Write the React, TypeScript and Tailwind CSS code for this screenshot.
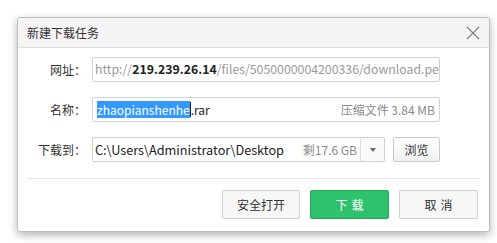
import React from 'react';

const font = { fontFamily: '"Noto Sans CJK SC", "Noto Sans", sans-serif' };

const Label = ({ text }: { text: string }) => (
  <div className="w-[68px] text-right text-[12px] text-[#333] leading-none">{text}</div>
);

const App = () => {
  return (
    <div className="w-[497px] h-[243px] bg-white pt-[17px] pl-[17px]" style={font}>
      <div className="w-[473px] h-[215px] bg-white border border-[#bcbcbc] rounded-[3px] shadow-[0_3px_9px_rgba(0,0,0,0.3)] flex flex-col">
        {/* Title bar */}
        <div className="h-[30px] flex items-center justify-between pl-[9px] pr-[8px] bg-[#f4f4f4] border-b border-[#dcdcdc] rounded-t-[3px]">
          <span className="text-[12px] text-[#333]">新建下载任务</span>
          <svg width="14" height="14" viewBox="0 0 14 14" className="mr-[1px]">
            <path d="M1 1 L13 13 M13 1 L1 13" stroke="#808080" strokeWidth="1.1" fill="none" />
          </svg>
        </div>

        {/* Fields */}
        <div className="pt-[9px] flex flex-col gap-[15px]">
          <div className="flex items-center h-[25px]">
            <Label text="网址：" />
            <div className="ml-[6px] w-[348px] h-[25px] border border-[#d3d3d3] rounded-[2px] flex items-center pl-[2px] overflow-hidden whitespace-nowrap text-[12.3px] text-[#9a9a9a]">
              http://<span className="text-[#222] font-bold">219.239.26.14</span>/files/5050000004200336/download.pe
            </div>
          </div>

          <div className="flex items-center h-[25px]">
            <Label text="名称：" />
            <div className="ml-[6px] w-[348px] h-[25px] border border-[#d3d3d3] rounded-[2px] flex items-center justify-between pl-[4px] pr-[4px] text-[12px]">
              <span className="flex items-center">
                <span className="bg-[#3399ff] text-white leading-[17px]">zhaopianshenhe</span>
                <span className="w-px h-[15px] bg-[#222]" />
                <span className="text-[#222]">.rar</span>
              </span>
              <span className="text-[#8a8a8a]">压缩文件 3.84 MB</span>
            </div>
          </div>

          <div className="flex items-center h-[25px]">
            <Label text="下载到：" />
            <div className="ml-[6px] w-[293px] h-[25px] border border-[#cfcfcf] rounded-[2px] flex items-center text-[12px]">
              <span className="flex-1 pl-[2px] text-[#222] text-[12.7px] whitespace-nowrap">C:\Users\Administrator\Desktop</span>
              <span className="text-[#8a8a8a] pr-[3px] whitespace-nowrap">剩17.6 GB</span>
              <span className="w-[24px] h-full border-l border-[#dedede] bg-[#fafafa] flex items-center justify-center">
                <svg width="6" height="4" viewBox="0 0 6 4">
                  <path d="M0 0 L6 0 L3 4 Z" fill="#666" />
                </svg>
              </span>
            </div>
            <button className="ml-[8px] w-[47px] h-[25px] border border-[#cacaca] rounded-[2px] bg-gradient-to-b from-white to-[#f1f1f1] text-[12px] text-[#333]">
              浏览
            </button>
          </div>
        </div>

        {/* Footer */}
        <div className="mt-[16px] mx-[9px] border-t border-[#e6e6e6]" />
        <div className="pt-[11px] pr-[11px] flex justify-end gap-[10px]">
          <button className="w-[78px] h-[29px] border border-[#cfcfcf] rounded-[2px] bg-[#f7f7f7] text-[12px] text-[#333]">
            安全打开
          </button>
          <button className="w-[79px] h-[29px] border border-[#27a85b] rounded-[2px] bg-[#2fc26c] text-[12px] text-white tracking-[4px] pl-[4px]">
            下载
          </button>
          <button className="w-[79px] h-[29px] border border-[#cfcfcf] rounded-[2px] bg-[#f7f7f7] text-[12px] text-[#333] tracking-[4px] pl-[4px]">
            取消
          </button>
        </div>
      </div>
    </div>
  );
};

export default App;
